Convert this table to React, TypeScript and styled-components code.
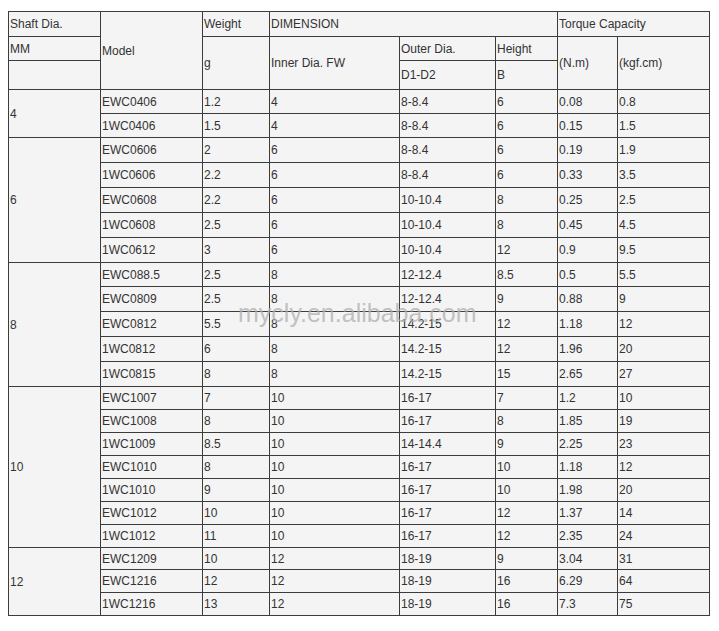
import * as React from 'react';
import styled, { createGlobalStyle } from 'styled-components';

const GlobalStyle = createGlobalStyle`
    body {
        margin: 0;
        background: #fff;
        font-family: "Liberation Sans", Arial, sans-serif;
    }
`;

const Page = styled.div`
    position: relative;
    padding: 11px 8px 16px 8px;
`;

const SpecTable = styled.table`
    border-collapse: collapse;
    table-layout: fixed;
    width: 702px;
    background: #f4f4f4;
    color: #333;
    font-size: 12px;
`;

const Row = styled.tr<{ $h: number }>`
    height: ${p => p.$h}px;
`;

const Cell = styled.td`
    border: 1px solid #3c3c3c;
    padding: 0 1px;
    vertical-align: middle;
    text-align: left;
    white-space: nowrap;
    overflow: hidden;
`;

// site watermark stamped over the middle of the table
const Watermark = styled.div`
    position: absolute;
    left: 238px;
    top: 299px;
    font-size: 25px;
    color: rgba(175, 175, 175, 0.75);
    pointer-events: none;
    white-space: nowrap;
`;

interface Item {
    model: string;
    weight: string;
    inner: string;
    outer: string;
    height: string;
    nm: string;
    kgf: string;
}

interface Group {
    shaft: string;
    rowHeight: number[];
    items: Item[];
}

const mk = (model: string, weight: string, inner: string, outer: string, height: string, nm: string, kgf: string): Item =>
    ({ model, weight, inner, outer, height, nm, kgf });

const groups: Group[] = [
    {
        shaft: '4',
        rowHeight: [24, 24],
        items: [
            mk('EWC0406', '1.2', '4', '8-8.4', '6', '0.08', '0.8'),
            mk('1WC0406', '1.5', '4', '8-8.4', '6', '0.15', '1.5'),
        ],
    },
    {
        shaft: '6',
        rowHeight: [25, 25, 25, 25, 25],
        items: [
            mk('EWC0606', '2', '6', '8-8.4', '6', '0.19', '1.9'),
            mk('1WC0606', '2.2', '6', '8-8.4', '6', '0.33', '3.5'),
            mk('EWC0608', '2.2', '6', '10-10.4', '8', '0.25', '2.5'),
            mk('1WC0608', '2.5', '6', '10-10.4', '8', '0.45', '4.5'),
            mk('1WC0612', '3', '6', '10-10.4', '12', '0.9', '9.5'),
        ],
    },
    {
        shaft: '8',
        rowHeight: [24, 25, 25, 25, 25],
        items: [
            mk('EWC088.5', '2.5', '8', '12-12.4', '8.5', '0.5', '5.5'),
            mk('EWC0809', '2.5', '8', '12-12.4', '9', '0.88', '9'),
            mk('EWC0812', '5.5', '8', '14.2-15', '12', '1.18', '12'),
            mk('1WC0812', '6', '8', '14.2-15', '12', '1.96', '20'),
            mk('1WC0815', '8', '8', '14.2-15', '15', '2.65', '27'),
        ],
    },
    {
        shaft: '10',
        rowHeight: [23, 23, 23, 23, 23, 23, 23],
        items: [
            mk('EWC1007', '7', '10', '16-17', '7', '1.2', '10'),
            mk('EWC1008', '8', '10', '16-17', '8', '1.85', '19'),
            mk('1WC1009', '8.5', '10', '14-14.4', '9', '2.25', '23'),
            mk('EWC1010', '8', '10', '16-17', '10', '1.18', '12'),
            mk('1WC1010', '9', '10', '16-17', '10', '1.98', '20'),
            mk('EWC1012', '10', '10', '16-17', '12', '1.37', '14'),
            mk('1WC1012', '11', '10', '16-17', '12', '2.35', '24'),
        ],
    },
    {
        shaft: '12',
        rowHeight: [22, 23, 23],
        items: [
            mk('EWC1209', '10', '12', '18-19', '9', '3.04', '31'),
            mk('EWC1216', '12', '12', '18-19', '16', '6.29', '64'),
            mk('1WC1216', '13', '12', '18-19', '16', '7.3', '75'),
        ],
    },
];

const colWidths = [92, 102, 67, 130, 96, 62, 60, 92];

export default function App() {
    return (
        <Page>
            <GlobalStyle />
            <SpecTable>
                <colgroup>
                    {colWidths.map((w, i) => <col key={i} style={{ width: w }} />)}
                </colgroup>
                <tbody>
                    <Row $h={25}>
                        <Cell>Shaft Dia.</Cell>
                        <Cell rowSpan={3}>Model</Cell>
                        <Cell>Weight</Cell>
                        <Cell colSpan={3}>DIMENSION</Cell>
                        <Cell colSpan={2}>Torque Capacity</Cell>
                    </Row>
                    <Row $h={24}>
                        <Cell>MM</Cell>
                        <Cell rowSpan={2}>g</Cell>
                        <Cell rowSpan={2}>Inner Dia. FW</Cell>
                        <Cell>Outer Dia.</Cell>
                        <Cell>Height</Cell>
                        <Cell rowSpan={2}>(N.m)</Cell>
                        <Cell rowSpan={2}>(kgf.cm)</Cell>
                    </Row>
                    <Row $h={29}>
                        <Cell></Cell>
                        <Cell>D1-D2</Cell>
                        <Cell>B</Cell>
                    </Row>
                    {groups.map(g =>
                        g.items.map((it, i) => (
                            <Row key={g.shaft + it.model} $h={g.rowHeight[i]}>
                                {i === 0 && <Cell rowSpan={g.items.length}>{g.shaft}</Cell>}
                                <Cell>{it.model}</Cell>
                                <Cell>{it.weight}</Cell>
                                <Cell>{it.inner}</Cell>
                                <Cell>{it.outer}</Cell>
                                <Cell>{it.height}</Cell>
                                <Cell>{it.nm}</Cell>
                                <Cell>{it.kgf}</Cell>
                            </Row>
                        ))
                    )}
                </tbody>
            </SpecTable>
            <Watermark>mycly.en.alibaba.com</Watermark>
        </Page>
    );
}
